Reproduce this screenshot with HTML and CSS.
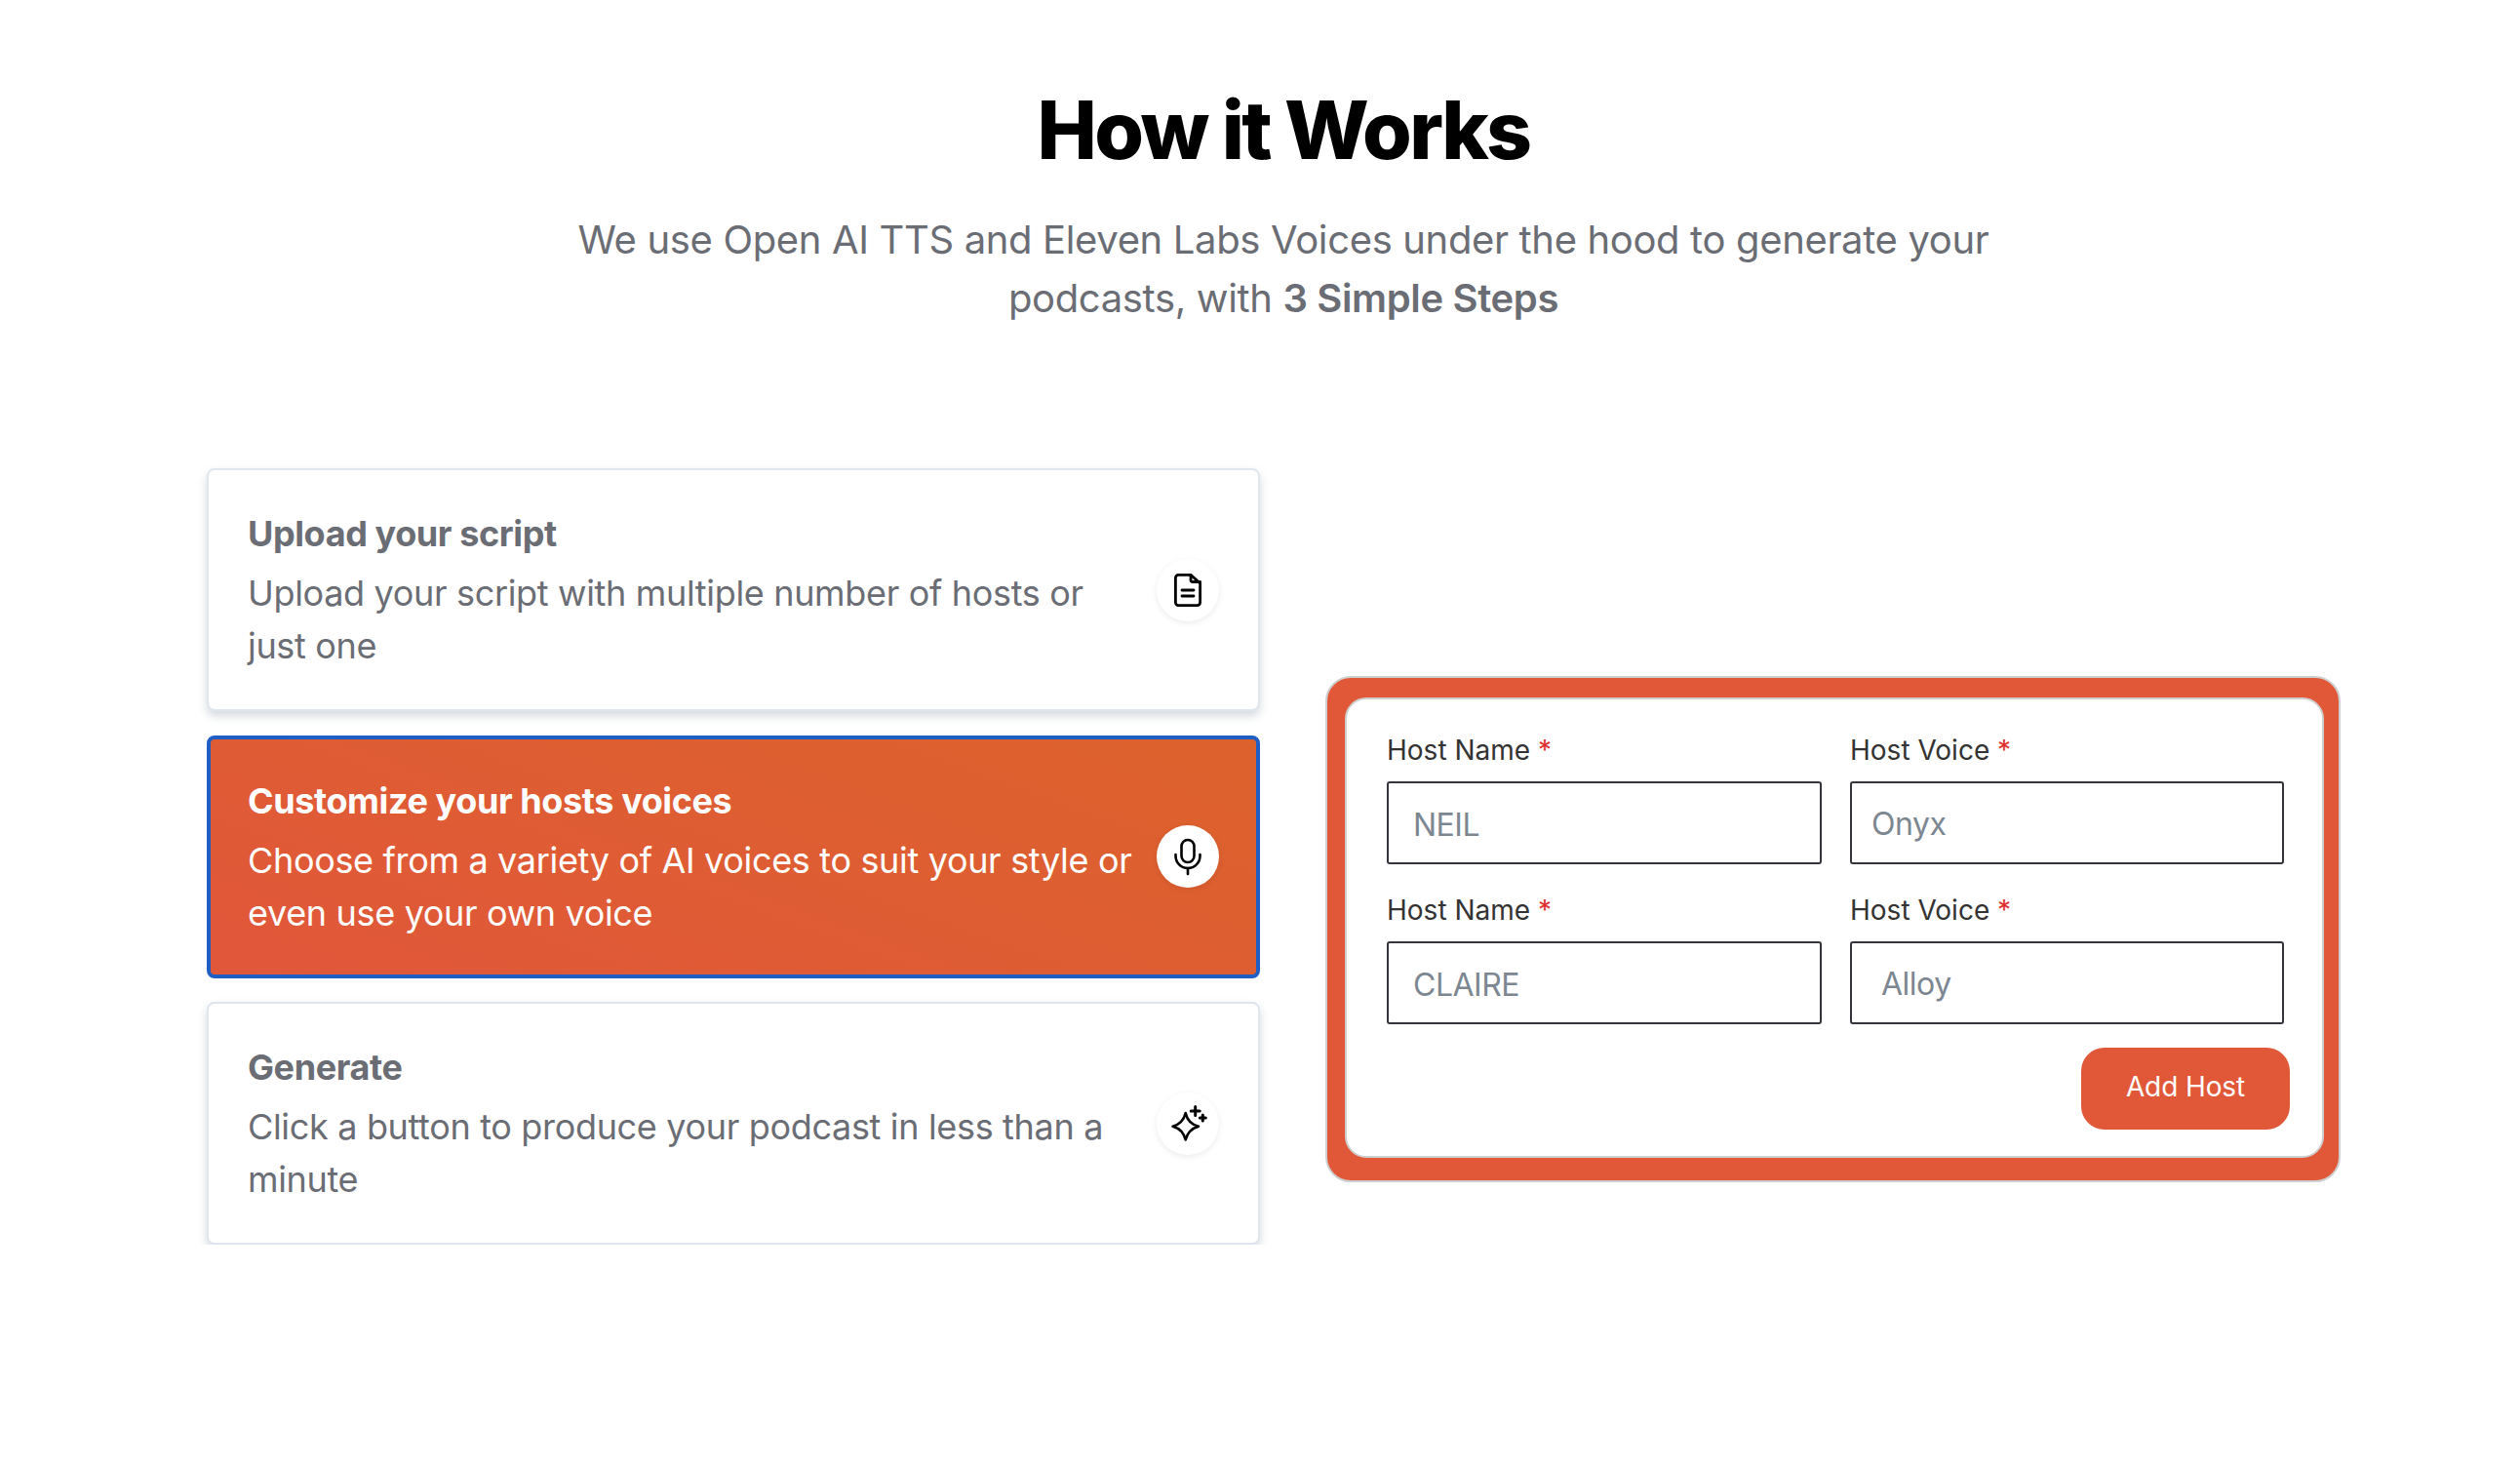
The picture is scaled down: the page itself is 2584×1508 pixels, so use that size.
FILE: index.html
```html
<!DOCTYPE html>
<html lang="en">

<head>
    <meta charset="UTF-8" />
    <meta name="viewport" content="width=device-width, initial-scale=1" />
    <title>How it Works</title>
    <link rel="stylesheet" href="styles.css">
</head>

<body>

    <main class="page">

        <header class="intro">
            <h1>How it Works</h1>
            <p>We use Open AI TTS and Eleven Labs Voices under the hood to generate your podcasts, with <strong>3 Simple Steps</strong></p>
        </header>

        <section class="works">

            <div class="steps">
                <div class="step">
                    <div class="step-text">
                        <h3>Upload your script</h3>
                        <p>Upload your script with multiple number of hosts or just one</p>
                    </div>
                    <span class="step-icon">
                        <svg viewBox="0 0 40 40" width="40" height="40" fill="none" stroke="#000" stroke-width="2.8" stroke-linejoin="round" stroke-linecap="round">
                            <path d="M10 4.400H23L32.600 13V32.600A3 3 0 0 1 29.600 35.600H10.400A3 3 0 0 1 7.400 32.600V7.400A3 3 0 0 1 10.400 4.400Z" />
                            <path d="M23 4.400V9.500A2 2 0 0 0 25 11.500H32.600" />
                            <path d="M14 20H26M14 26H26" />
                        </svg>
                    </span>
                </div>

                <div class="step active">
                    <div class="step-text">
                        <h3>Customize your hosts voices</h3>
                        <p>Choose from a variety of AI voices to suit your style or even use your own voice</p>
                    </div>
                    <span class="step-icon">
                        <svg viewBox="0 0 40 40" width="40" height="40" fill="none" stroke="#000" stroke-width="2.6" stroke-linecap="round">
                            <rect x="13.500" y="3" width="13" height="23" rx="6.500" />
                            <path d="M7.500 18V19.500A12.500 12.500 0 0 0 32.500 19.500V18" />
                            <path d="M20 32V38" />
                        </svg>
                    </span>
                </div>

                <div class="step">
                    <div class="step-text">
                        <h3>Generate</h3>
                        <p>Click a button to produce your podcast in less than a minute</p>
                    </div>
                    <span class="step-icon">
                        <svg viewBox="0 0 40 40" width="40" height="40" fill="none" stroke="#000" stroke-width="2.6" stroke-linecap="round" stroke-linejoin="round">
                            <path d="M17.700 9Q20 20 31 22.700Q20.500 25.500 17.700 36.500Q15 25.500 4.500 22.700Q15 20 17.700 9Z" />
                            <path d="M27.700 2.500V11.500M23.200 7H32.200" stroke-width="3" />
                            <path d="M35.300 11V17M32.300 14H38.300" stroke-width="3" />
                        </svg>
                    </span>
                </div>
            </div>

            <div class="panel">
                <form class="host-form">
                    <div class="field">
                        <label>Host Name <span class="req">*</span></label>
                        <input type="text" class="pad-md" placeholder="NEIL" />
                    </div>
                    <div class="field">
                        <label>Host Voice <span class="req">*</span></label>
                        <input type="text" class="pad-sm" placeholder="Onyx" />
                    </div>
                    <div class="field">
                        <label>Host Name <span class="req">*</span></label>
                        <input type="text" class="pad-md" placeholder="CLAIRE" />
                    </div>
                    <div class="field">
                        <label>Host Voice <span class="req">*</span></label>
                        <input type="text" class="pad-lg" placeholder="Alloy" />
                    </div>
                    <div class="form-actions">
                        <button type="button" class="btn-add">Add Host</button>
                    </div>
                </form>
            </div>

        </section>

    </main>

</body>

</html>
```

FILE: styles.css
```css
* {
    box-sizing: border-box;
}

body {
    margin: 0;
    background: #fff;
    font-family: Inter, "Liberation Sans", sans-serif;
}

.page {
    padding: 0 184px 0 212px;
}

.intro {
    padding: 89px 0 0 20px;
    text-align: center;
}

.intro h1 {
    margin: 0;
    font-size: 82px;
    line-height: 90px;
    font-weight: 800;
    letter-spacing: -2.7px;
    color: #000;
}

.intro p {
    width: 1480px;
    margin: 37px auto 0;
    font-size: 40px;
    line-height: 60px;
    letter-spacing: -0.35px;
    color: #6b6d75;
}

.intro strong {
    font-weight: 600;
}

.works {
    display: grid;
    grid-template-columns: 1080px 1041px;
    column-gap: 67px;
    margin-top: 144px;
}

.steps {
    display: flex;
    flex-direction: column;
    gap: 24.6px;
}

.step {
    display: flex;
    align-items: center;
    justify-content: space-between;
    height: 249px;
    padding: 0 40px 0 40px;
    background: #fff;
    border: 2px solid #e0e6ed;
    border-radius: 8px;
    box-shadow: 0 5px 10px rgb(100 116 139 / 0.28);
    color: #6b6d75;
}

.step.active {
    padding: 0 38px 0 38px;
    background: linear-gradient(20deg, #e1573a, #dc622c);
    border: 4px solid #1f5fc4;
    box-shadow: none;
    color: #fff;
}

.step-text {
    width: 925px;
}

.step h3 {
    margin: 0 0 7px;
    font-size: 36px;
    line-height: 54px;
    font-weight: 700;
    letter-spacing: -0.4px;
}

.step p {
    margin: 0;
    font-size: 36px;
    line-height: 54px;
    letter-spacing: -0.33px;
}

.step-icon {
    display: flex;
    align-items: center;
    justify-content: center;
    width: 64px;
    height: 64px;
    flex-shrink: 0;
    background: #fff;
    border-radius: 50%;
    box-shadow: 0 2px 6px rgb(0 0 0 / 0.08);
}

.panel {
    align-self: start;
    margin-top: 213px;
    height: 519px;
    padding: 20px 15px 23px 18px;
    background: #e15839;
    border: 2px solid #cfcfcf;
    border-radius: 26px;
}

.host-form {
    display: grid;
    grid-template-columns: 446px 445px;
    column-gap: 29px;
    row-gap: 28.5px;
    align-content: start;
    height: 100%;
    padding: 34px 0 0 41px;
    background: #fff;
    border: 2px solid #cfcfcf;
    border-radius: 22px;
}

.field label {
    display: block;
    margin-bottom: 14px;
    font-size: 28px;
    line-height: 36px;
    color: #333;
}

.req {
    color: #e03131;
}

.field input {
    display: block;
    width: 100%;
    height: 85px;
    border: 2px solid #33353a;
    border-radius: 3px;
    background: #fff;
    font-family: inherit;
    font-size: 32px;
    letter-spacing: -0.5px;
}

.field input::placeholder {
    color: #7c8791;
    opacity: 1;
}

.pad-sm {
    padding: 2px 20px 0;
}

.pad-md {
    padding: 4px 25px 0;
}

.pad-lg {
    padding: 2px 30px 0;
}

.form-actions {
    grid-column: 1 / -1;
    display: flex;
    justify-content: flex-end;
    margin: -4.5px -6px 0 0;
}

.btn-add {
    width: 214px;
    height: 84px;
    padding: 0 0 3px;
    border: none;
    border-radius: 24px;
    background: #e15839;
    color: #fff;
    font-family: inherit;
    font-size: 28px;
    letter-spacing: -0.1px;
    cursor: pointer;
}
```
